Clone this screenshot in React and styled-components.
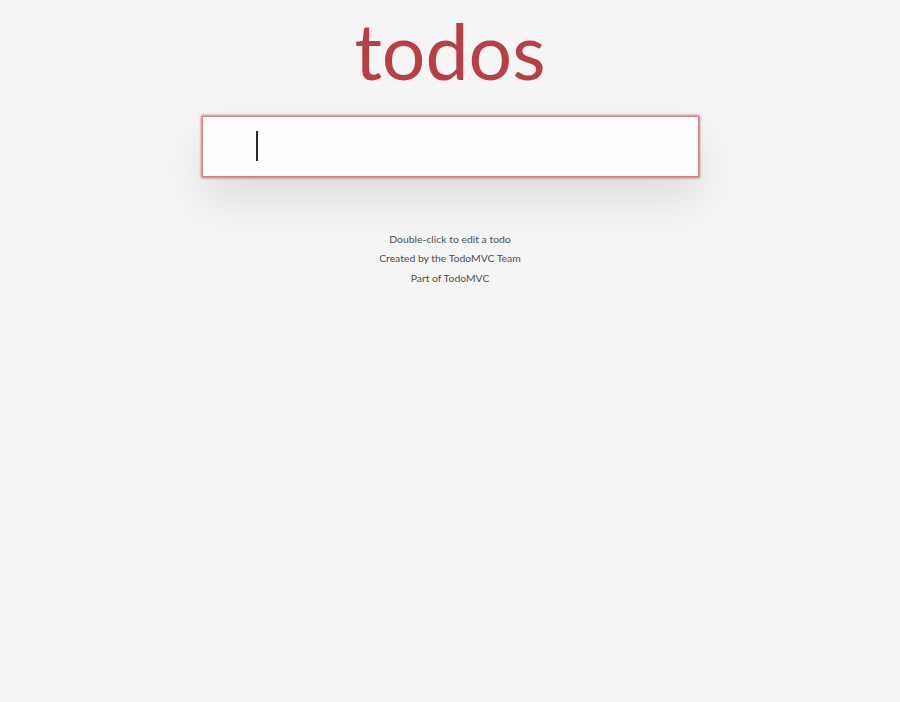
import React from "react";
import styled, { createGlobalStyle } from "styled-components";

const Global = createGlobalStyle`
  html, body { margin: 0; padding: 0; }
  body {
    background: #f5f5f5;
    color: #111;
    font-family: Lato, "Open Sans", sans-serif;
    font-size: 12.6px;
    line-height: 1.4em;
    -webkit-font-smoothing: antialiased;
  }
`;

const Page = styled.div`
  width: 495px;
  margin: 0 auto;
  padding-top: 1px;
`;

const Title = styled.h1`
  margin: 0;
  height: 116px;
  font-size: 77px;
  font-weight: 400;
  line-height: 98px;
  text-align: center;
  color: #b83f45;
  text-rendering: optimizeLegibility;
`;

const Card = styled.section`
  position: relative;
  background: #fff;
  box-shadow: 0 1.8px 3.6px 0 rgba(0, 0, 0, 0.2), 0 22.5px 45px 0 rgba(0, 0, 0, 0.1);
`;

const NewTodo = styled.input`
  display: block;
  box-sizing: border-box;
  width: 100%;
  margin: 0;
  padding: 14.4px 14.4px 14.4px 54px;
  border: none;
  outline: none;
  font-family: inherit;
  font-size: 21.6px;
  line-height: 1.4em;
  height: 59px;
  color: inherit;
  caret-color: transparent;
  background: rgba(0, 0, 0, 0.003);
  box-shadow: 0 0 2px 2px #cf7d7d;
`;

const Caret = styled.span`
  position: absolute;
  left: 53.5px;
  top: 14px;
  width: 1.8px;
  height: 30px;
  background: #2a2a2a;
  pointer-events: none;
`;

const Info = styled.footer`
  margin-top: 57.5px;
  color: #4d4d4d;
  font-size: 10.4px;
  text-align: center;
  text-shadow: 0 1px 0 rgba(255, 255, 255, 0.5);
`;

const Line = styled.p`
  margin: 9.7px 0;
  line-height: 10px;
  &:first-child { margin-top: 0; }
`;

export default function App() {
  return (
    <>
      <Global />
      <Page>
        <Title>todos</Title>
        <Card>
          <NewTodo autoFocus aria-label="New todo" />
          <Caret />
        </Card>
        <Info>
          <Line>Double-click to edit a todo</Line>
          <Line>Created by the TodoMVC Team</Line>
          <Line>Part of TodoMVC</Line>
        </Info>
      </Page>
    </>
  );
}
